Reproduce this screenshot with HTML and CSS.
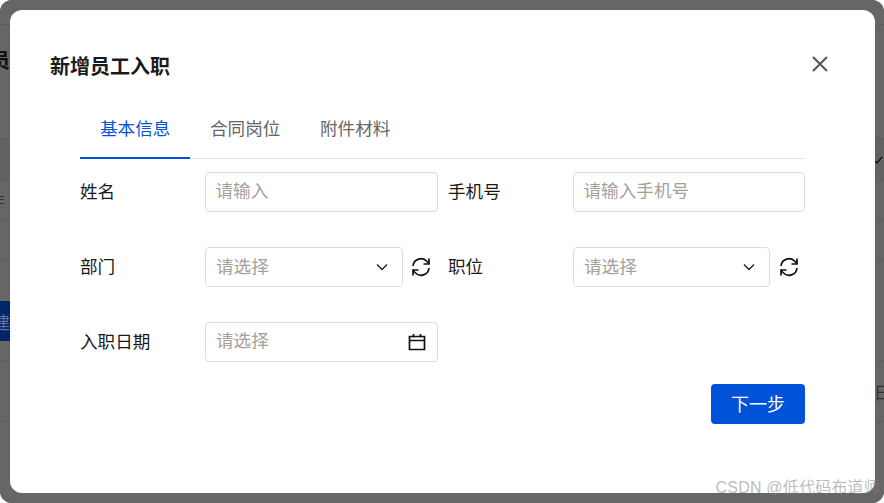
FILE: index.html
```html
<!DOCTYPE html>
<html lang="zh-CN">
<head>
<meta charset="utf-8">
<title>新增员工入职</title>
<link rel="stylesheet" href="styles.css">
</head>
<body>
<div class="screen">
  <div class="backdrop">
    <div class="bg-row bg-top"></div>
    <div class="bg-row bg-title"><span class="bg-title-text">员</span></div>
    <div class="bg-row bg-head">
      <svg class="bg-check" viewBox="0 0 10 8" width="10" height="8"><path d="M1 4l3 3 5-6" fill="none" stroke="#111" stroke-width="1.3"/></svg>
    </div>
    <div class="bg-row bg-r1"><span class="bg-cell">年</span></div>
    <div class="bg-row bg-r2"></div>
    <div class="bg-row bg-r3"><span class="bg-btn">建</span></div>
    <div class="bg-row bg-r4"><span class="bg-end">日</span></div>
  </div>

  <div class="modal-layer">
    <section class="modal">
      <header class="modal-head">
        <h1 class="modal-title">新增员工入职</h1>
        <svg class="close" viewBox="0 0 16 16" width="16" height="16"><path d="M1 1l14 14M15 1L1 15" fill="none" stroke="#555" stroke-width="2"/></svg>
      </header>
      <div class="body">
        <nav class="tabs">
          <span class="tab active">基本信息</span>
          <span class="tab">合同岗位</span>
          <span class="tab">附件材料</span>
        </nav>
        <form class="form">
          <div class="field">
            <label class="label">姓名</label>
            <div class="input"><span class="ph">请输入</span></div>
          </div>
          <div class="field">
            <label class="label">手机号</label>
            <div class="input"><span class="ph">请输入手机号</span></div>
          </div>
          <div class="field">
            <label class="label">部门</label>
            <div class="input select"><span class="ph">请选择</span>
              <svg class="chev" viewBox="0 0 12 8" width="12" height="8"><path d="M1 1.5l5 5 5-5" fill="none" stroke="#222" stroke-width="1.4"/></svg>
            </div>
            <svg class="refresh" viewBox="0 0 20 20" width="20" height="20"><path d="M2 9a8 8 0 0 1 14-4.500L18 6.500M18 1.500V7h-5.500M18 11a8 8 0 0 1-14 4.500L2 13.500M2 18.500V13h5.500" fill="none" stroke="#111" stroke-width="1.7"/></svg>
          </div>
          <div class="field">
            <label class="label">职位</label>
            <div class="input select"><span class="ph">请选择</span>
              <svg class="chev" viewBox="0 0 12 8" width="12" height="8"><path d="M1 1.5l5 5 5-5" fill="none" stroke="#222" stroke-width="1.4"/></svg>
            </div>
            <svg class="refresh" viewBox="0 0 20 20" width="20" height="20"><path d="M2 9a8 8 0 0 1 14-4.500L18 6.500M18 1.500V7h-5.500M18 11a8 8 0 0 1-14 4.500L2 13.500M2 18.500V13h5.500" fill="none" stroke="#111" stroke-width="1.7"/></svg>
          </div>
          <div class="field">
            <label class="label">入职日期</label>
            <div class="input select date"><span class="ph">请选择</span>
              <svg class="cal" viewBox="0 0 18 18" width="18" height="18"><path d="M1.500 3.500h15v13h-15zM1.500 7.500h15M5.500 1v3.500M12.500 1v3.500" fill="none" stroke="#111" stroke-width="1.700"/></svg>
            </div>
          </div>
        </form>
        <div class="actions"><button type="button" class="next">下一步</button></div>
      </div>
    </section>
  </div>
  <div class="watermark">CSDN @低代码布道师</div>
</div>
</body>
</html>
```
FILE: styles.css
```css
* { box-sizing: border-box; }
html, body { margin: 0; padding: 0; background: #fff; }
body {
  width: 884px; height: 503px; overflow: hidden;
  font-family: "Noto Sans CJK SC", "Noto Sans", sans-serif;
}
.screen {
  position: relative;
  width: 884px; height: 503px;
  display: grid;
  border-radius: 12px;
  overflow: hidden;
  background: #666;
}
.backdrop, .modal-layer { grid-area: 1 / 1; min-width: 0; min-height: 0; }
.backdrop { background: #666; color: #222; overflow: hidden; }
.bg-row { border-bottom: 1px solid #5c5c5c; display: flex; align-items: center; justify-content: space-between; font-size: 17px; }
.bg-top { height: 25px; }
.bg-title { height: 114px; background: #666; align-items: flex-start; padding-top: 20px; }
.bg-title-text { font-size: 20px; font-weight: 700; color: #111; margin-left: -10px; }
.bg-head { height: 42px; background: #626262; justify-content: flex-end; padding-right: 1px; }
.bg-check { margin-right: 0; }
.bg-r1 { height: 39px; }
.bg-cell { margin-left: -9px; font-size: 14px; color: #333; }
.bg-r2 { height: 41px; }
.bg-r3 { height: 101px; align-items: flex-start; padding-top: 40px; }
.bg-btn { width: 10px; height: 40px; background: #002569; color: #66759a; display: flex; align-items: center; font-size: 17px; text-indent: -7px; overflow: hidden; white-space: nowrap; }
.bg-r4 { height: 60px; justify-content: flex-end; }
.bg-end { margin-right: -7px; color: #333; }

.modal-layer { display: flex; padding: 10px 9px 10px 10px; }
.modal {
  flex: 1;
  background: #fff;
  border-radius: 12px;
  padding: 40px 70px 0;
}
.modal-head { display: flex; align-items: center; justify-content: space-between; height: 32px; margin-left: -30px; margin-right: -25px; }
.modal-title { margin: 0; font-size: 20px; line-height: 32px; font-weight: 700; color: #1a1a1a; }
.close { display: block; margin: -4px 2px 0 0; }
.body { margin-top: 28px; }
.tabs { display: flex; height: 49px; border-bottom: 1px solid #e4e4e4; }
.tab { width: 110px; height: 49px; padding: 0 20px; font-size: 17.6px; line-height: 36px; color: #666; text-align: center; white-space: nowrap; }
.tab.active { color: #0052d9; border-bottom: 2px solid #0052d9; }
.form { display: grid; grid-template-columns: 358px 357px; column-gap: 10px; row-gap: 35px; margin-top: 13px; }
.field { display: flex; align-items: center; height: 40px; }
.label { width: 125px; flex: none; font-size: 17.6px; line-height: 36px; color: #1a1a1a; position: relative; top: -1px; }
.input {
  flex: 1; min-width: 0; height: 40px;
  display: flex; align-items: center; justify-content: space-between;
  border: 1px solid #dcdcdc; border-radius: 4px;
  padding: 0 10px 0 9.5px;
  font-size: 17.6px;
}
.ph { color: #a69f9a; line-height: 1; position: relative; top: -2px; }
.select { padding: 0 14px 0 10px; }
.select .ph { top: -1px; }
.date { padding-right: 11px; }
.date .ph { top: -2px; }
.refresh { flex: none; margin: 0 7px 0 8px; }
.field:nth-child(4) .refresh { margin: 0 6px 0 9px; }
.chev, .cal { display: block; flex: none; }
.actions { display: flex; justify-content: flex-end; margin-top: 22px; }
.next {
  width: 94px; height: 40px;
  border: 0; border-radius: 4px;
  background: #0052d9; color: #fff;
  font: inherit; font-size: 18px; line-height: 36px; padding: 0 0 3px;
}
.watermark {
  position: absolute; right: 4px; bottom: 4px;
  font-size: 16px; line-height: 22px; letter-spacing: 0.2px;
  color: rgba(130,130,130,.55);
  font-family: "Liberation Sans", "Noto Sans CJK SC", sans-serif;
  white-space: nowrap;
}
```
